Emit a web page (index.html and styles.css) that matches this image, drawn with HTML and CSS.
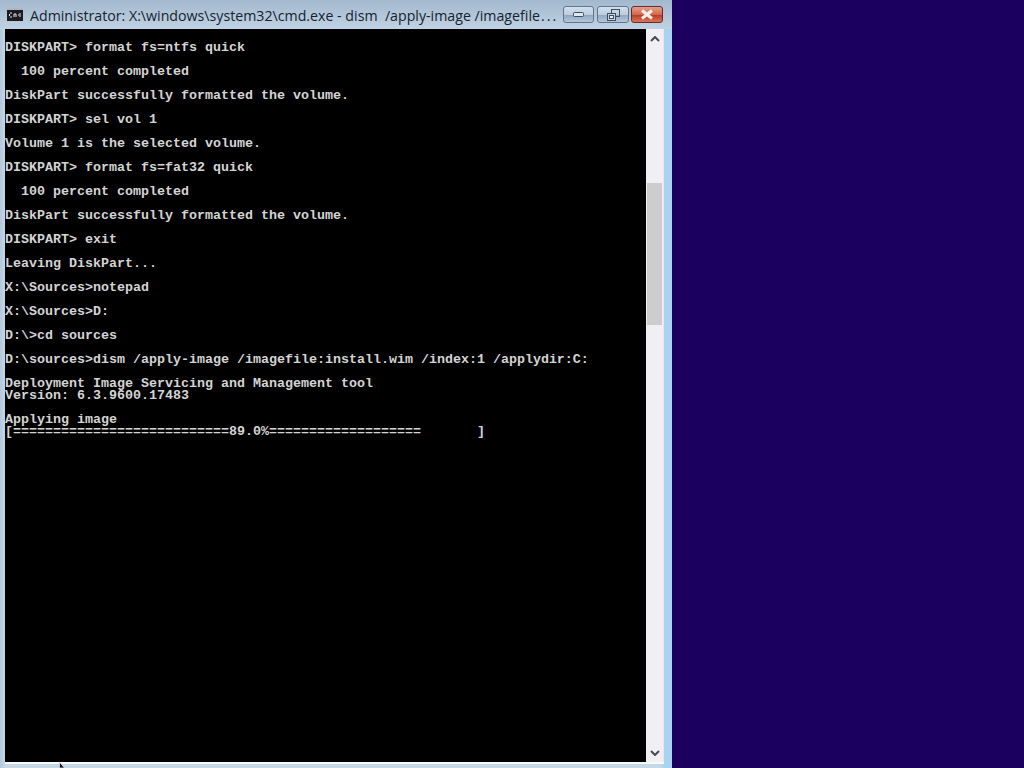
FILE: index.html
```html
<!DOCTYPE html>
<html lang="en">
<head>
<meta charset="utf-8">
<title>cmd.exe</title>
<link rel="stylesheet" href="styles.css">
</head>
<body>
<div class="window">
  <header class="titlebar">
    <svg class="appicon" width="16" height="13" viewBox="0 0 16 13">
      <rect x="0" y="0" width="16" height="13" fill="#1c1c20"/>
      <rect x="0" y="0" width="16" height="2" fill="#aeb6c0"/>
      <path d="M3 5h2M2.500 6v2M3 9h2M7 9V6M7 6h2M9 6v3M11 7h1M13 5v4" stroke="#e8e8e8" stroke-width="1" fill="none"/>
    </svg>
    <div class="title">Administrator: X:\windows\system32\cmd.exe - dism  /apply-image /imagefile<span class="dots">...</span></div>
    <div class="controls">
      <div class="btn min">
        <svg width="11" height="5" viewBox="0 0 11 5"><rect x="0.500" y="0.500" width="10" height="4" rx="1" fill="#dfe8f1" stroke="#3d4c60"/></svg>
      </div>
      <div class="btn">
        <svg width="13" height="12" viewBox="0 0 13 12" fill="none" stroke="#3d4c60"><rect x="4.500" y="0.500" width="8" height="7"/><rect x="0.500" y="4.500" width="8" height="7" fill="#c4d4e3"/><rect x="2.500" y="6.500" width="4" height="3" fill="#e8eef5"/></svg>
      </div>
      <div class="btn close">
        <svg width="14" height="11" viewBox="0 0 14 11"><path d="M2 1.500l10 8M12 1.500l-10 8" stroke="#f6eeea" stroke-width="3" fill="none"/></svg>
      </div>
    </div>
  </header>
  <div class="client">
    <pre class="console">DISKPART&gt; format fs=ntfs quick

  100 percent completed

DiskPart successfully formatted the volume.

DISKPART&gt; sel vol 1

Volume 1 is the selected volume.

DISKPART&gt; format fs=fat32 quick

  100 percent completed

DiskPart successfully formatted the volume.

DISKPART&gt; exit

Leaving DiskPart...

X:\Sources&gt;notepad

X:\Sources&gt;D:

D:\&gt;cd sources

D:\sources&gt;dism /apply-image /imagefile:install.wim /index:1 /applydir:C:

Deployment Image Servicing and Management tool
Version: 6.3.9600.17483

Applying image
[===========================89.0%===================       ]</pre>
    <div class="scrollbar">
      <svg class="arrow" width="10" height="6" viewBox="0 0 10 6"><path d="M1 5l4-4 4 4" stroke="#4a4a4a" stroke-width="2" fill="none"/></svg>
      <div class="track"><div class="thumb"></div></div>
      <svg class="arrow" width="10" height="6" viewBox="0 0 10 6"><path d="M1 1l4 4 4-4" stroke="#4a4a4a" stroke-width="2" fill="none"/></svg>
    </div>
  </div>
  <svg class="cursor" width="11" height="6" viewBox="0 0 11 6"><path d="M0.500 0v6h5L0.500 0z" fill="#111" stroke="#eee" stroke-width="0.700"/></svg>
</div>
</body>
</html>
```
FILE: styles.css
```css
html, body {
  margin: 0;
  height: 100%;
  overflow: hidden;
}
body {
  background: #1b0060;
}
.window {
  position: relative;
  box-sizing: border-box;
  width: 672px;
  height: 768px;
  padding: 0 8px 4px 5px;
  display: flex;
  flex-direction: column;
  background: linear-gradient(to right, #b4c6d8 0, #c6d8e6 5px, #c6d8e6 660px, #a8d4f0 664px);
}
.titlebar {
  height: 29px;
  flex: none;
  display: flex;
  align-items: center;
  background: linear-gradient(to bottom, #a2b8cd, #c0d3e4);
  margin: 0 -8px 0 -5px;
  padding: 0 9px 0 6px;
}
.appicon {
  flex: none;
  margin: 0 7px 0 1px;
}
.title {
  flex: 1;
  font: 14.2px/20px "Open Sans", "Liberation Sans", sans-serif;
  color: #16222e;
  white-space: pre;
  margin-top: 2px;
}
.dots {
  letter-spacing: 2px;
  margin-left: 1px;
}
.controls {
  display: flex;
  gap: 2px;
}
.btn {
  width: 32px;
  height: 17px;
  box-sizing: border-box;
  border: 1px solid #5f7690;
  border-radius: 3px;
  display: flex;
  align-items: center;
  justify-content: center;
  background: linear-gradient(to bottom, #d3e0ec 0, #bccddd 50%, #93a8be 55%, #b4c8db 100%);
}
.btn.min {
  width: 31px;
  margin-right: 1px;
}
.btn.close {
  border-color: #6b2a2a;
  background: linear-gradient(to bottom, #e3a08e 0, #d2694e 50%, #bd3c22 55%, #d8765c 100%);
}
.client {
  flex: 1;
  display: flex;
  min-height: 0;
  border-bottom: 2px solid #f7f9fb;
}
.console {
  flex: none;
  width: 641px;
  margin: 0;
  padding: 13px 0 0;
  box-sizing: border-box;
  background: #000;
  color: #d4d4d4;
  font: bold 13.33px/12px "Liberation Mono", monospace;
  overflow: hidden;
}
.scrollbar {
  flex: none;
  width: 18px;
  background: #f0f0f3;
  display: flex;
  flex-direction: column;
  align-items: center;
  padding: 7px 0 6px;
  box-sizing: border-box;
  border-right: 1px solid #ece4ee;
}
.track {
  flex: 1;
  width: 100%;
  padding: 141px 1px 0;
  box-sizing: border-box;
}
.thumb {
  height: 142px;
  background: #cdcdcd;
}
.cursor {
  position: absolute;
  left: 59px;
  top: 762px;
}
```
